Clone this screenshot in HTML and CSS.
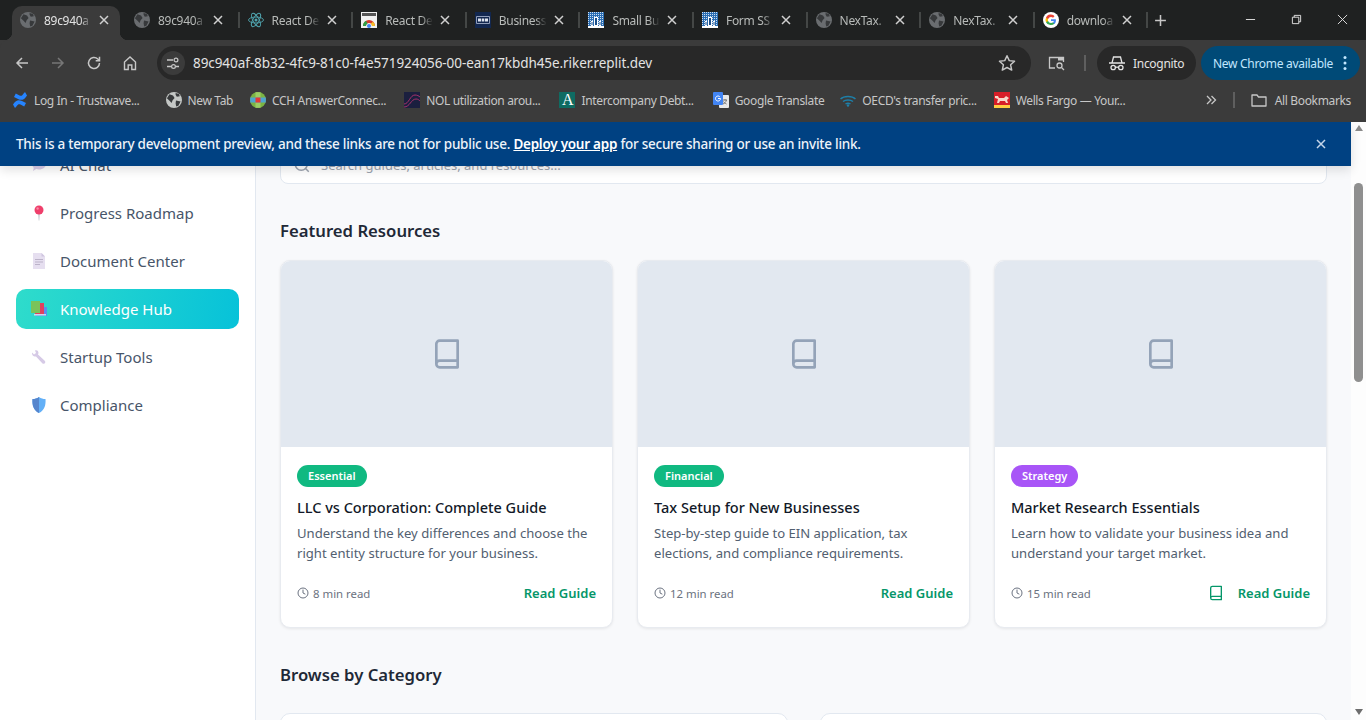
FILE: index.html
```html
<!DOCTYPE html>
<html lang="en">
<head>
    <meta charset="UTF-8">
    <title>Knowledge Hub</title>
    <link rel="stylesheet" href="styles.css">
</head>
<body>
<svg class="defs" width="0" height="0">
    <defs>
        <pattern id="dither" width="2" height="2" patternUnits="userSpaceOnUse">
            <rect width="2" height="2" fill="#2a6db3"/>
            <rect width="1" height="1" fill="#cfe0f2"/>
        </pattern>
    </defs>
    <symbol id="i-globe" viewBox="0 0 16 16">
        <circle cx="8" cy="8" r="8" fill="currentColor"/>
        <path class="land" d="M3.500 2.200 7 3.600 8.600 6 6.600 8.200 5.600 11 3.800 9 .9 6.200zM10 8.600l4.600 1-2.200 4.200-2.200.6-.6-3.200zM9.600 1l3.400 1 .8 2.200-3 .6-1.200-2z"/>
    </symbol>
    <symbol id="i-close" viewBox="0 0 10 10">
        <path d="M1 1l8 8M9 1L1 9" stroke="currentColor" stroke-width="1.500" fill="none"/>
    </symbol>
    <symbol id="i-seal" viewBox="0 0 16 16">
        <rect width="16" height="16" fill="#fff"/>
        <rect width="16" height="16" fill="url(#dither)"/>
        <path d="M0 14h16v2H0zM6 5h4v9H6zM3 9h2v5H3zM11 9h2v5h-2z" fill="#fff"/>
        <path d="M7 6h2v7H7zM3.500 10h1v3h-1zM11.500 10h1v3h-1z" fill="#1c4f8a"/>
    </symbol>
    <symbol id="i-book" viewBox="0 0 24 24">
        <path d="M4 19.500V4.500A2.500 2.500 0 0 1 6.500 2H20v20H6.500A2.500 2.500 0 0 1 4 19.500zM4 19.500A2.500 2.500 0 0 1 6.500 17H20" fill="none" stroke="currentColor" stroke-width="2" stroke-linejoin="round"/>
    </symbol>
    <symbol id="i-clock" viewBox="0 0 24 24">
        <circle cx="12" cy="12" r="10" fill="none" stroke="currentColor" stroke-width="2"/>
        <path d="M12 6v6l4 2" fill="none" stroke="currentColor" stroke-width="2" stroke-linecap="round"/>
    </symbol>
</svg>

<div class="tabstrip">
    <div class="tab active">
        <svg class="fav grey"><use href="#i-globe"/></svg>
        <span class="tab-title">89c940a</span>
        <svg class="tab-x"><use href="#i-close"/></svg>
    </div>
    <div class="tab">
        <svg class="fav grey"><use href="#i-globe"/></svg>
        <span class="tab-title">89c940a</span>
        <svg class="tab-x"><use href="#i-close"/></svg>
    </div>
    <div class="tab">
        <svg class="fav" viewBox="0 0 16 16">
            <g fill="none" stroke="#4fa3ad" stroke-width=".9">
                <ellipse cx="8" cy="8" rx="7.500" ry="3"/>
                <ellipse cx="8" cy="8" rx="7.500" ry="3" transform="rotate(60 8 8)"/>
                <ellipse cx="8" cy="8" rx="7.500" ry="3" transform="rotate(120 8 8)"/>
            </g>
            <circle cx="8" cy="8" r="1.500" fill="#4fa3ad"/>
        </svg>
        <span class="tab-title">React De</span>
        <svg class="tab-x"><use href="#i-close"/></svg>
    </div>
    <div class="tab">
        <svg class="fav" viewBox="0 0 16 16">
            <rect width="16" height="16" fill="#f1f1f1"/>
            <rect x="1" y="1" width="14" height="3" fill="#555"/>
            <path d="M2 14a6 6 0 0 1 12 0h-3a3 3 0 0 0-6 0z" fill="#d8392b"/>
            <path d="M2 14a6 6 0 0 1 3-5.200L6.500 11.400A3 3 0 0 0 5 14z" fill="#2f9e44"/>
            <path d="M11 14a3 3 0 0 0-1.200-2.400L12 9.800A6 6 0 0 1 14 14z" fill="#f6bf26"/>
            <circle cx="8" cy="14" r="2" fill="#4285f4"/>
        </svg>
        <span class="tab-title">React De</span>
        <svg class="tab-x"><use href="#i-close"/></svg>
    </div>
    <div class="tab">
        <svg class="fav" viewBox="0 0 16 16">
            <rect width="16" height="16" fill="#12274f"/>
            <path d="M1.500 4.500h13v7h-13z" fill="none" stroke="#8f9db9"/>
            <path d="M3 6.500h3v3H3zM6.700 6.500h2.600v3H6.700zM10 6.500h3v3h-3z" fill="#dfe5f0"/>
        </svg>
        <span class="tab-title">Business</span>
        <svg class="tab-x"><use href="#i-close"/></svg>
    </div>
    <div class="tab">
        <svg class="fav"><use href="#i-seal"/></svg>
        <span class="tab-title">Small Bu</span>
        <svg class="tab-x"><use href="#i-close"/></svg>
    </div>
    <div class="tab">
        <svg class="fav"><use href="#i-seal"/></svg>
        <span class="tab-title">Form SS</span>
        <svg class="tab-x"><use href="#i-close"/></svg>
    </div>
    <div class="tab">
        <svg class="fav grey"><use href="#i-globe"/></svg>
        <span class="tab-title">NexTax.</span>
        <svg class="tab-x"><use href="#i-close"/></svg>
    </div>
    <div class="tab">
        <svg class="fav grey"><use href="#i-globe"/></svg>
        <span class="tab-title">NexTax.</span>
        <svg class="tab-x"><use href="#i-close"/></svg>
    </div>
    <div class="tab">
        <svg class="fav" viewBox="0 0 16 16">
            <circle cx="8" cy="8" r="8" fill="#fff"/>
            <path d="M12.900 8.200c0-.4 0-.7-.1-1H8v1.900h2.800a2.400 2.400 0 0 1-1 1.600v1.300h1.600c1-.9 1.500-2.200 1.500-3.800z" fill="#4285f4"/>
            <path d="M8 13c1.400 0 2.500-.4 3.400-1.200l-1.600-1.300c-.5.300-1 .5-1.800.5a3.100 3.100 0 0 1-2.900-2.100H3v1.300A5 5 0 0 0 8 13z" fill="#34a853"/>
            <path d="M5.100 8.900a3 3 0 0 1 0-1.900V5.700H3a5 5 0 0 0 0 4.500z" fill="#fbbc05"/>
            <path d="M8 5c.8 0 1.500.3 2 .8l1.500-1.500A5 5 0 0 0 3 5.700L5.100 7A3.100 3.100 0 0 1 8 5z" fill="#ea4335"/>
        </svg>
        <span class="tab-title">downloa</span>
        <svg class="tab-x"><use href="#i-close"/></svg>
    </div>
    <svg class="new-tab" viewBox="0 0 12 12"><path d="M6 1v10M1 6h10" stroke="#c7c7c7" stroke-width="1.400" fill="none"/></svg>
    <div class="win-btns">
        <svg viewBox="0 0 12 12"><path d="M1 6h10" stroke="#e8e8e8" fill="none"/></svg>
        <svg viewBox="0 0 12 12"><path d="M1.500 3.500h7v7h-7zM3.500 3.500v-2h7v7h-2" stroke="#e8e8e8" fill="none"/></svg>
        <svg viewBox="0 0 12 12"><path d="M1 1l10 10M11 1L1 11" stroke="#e8e8e8" fill="none"/></svg>
    </div>
</div>

<div class="toolbar">
    <svg class="nav-ico" viewBox="0 0 16 16"><path d="M14 8H3M8 3L3 8l5 5" stroke="#c7c7c7" stroke-width="1.500" fill="none"/></svg>
    <svg class="nav-ico" viewBox="0 0 16 16"><path d="M2 8h11M8 3l5 5-5 5" stroke="#777" stroke-width="1.500" fill="none"/></svg>
    <svg class="nav-ico" viewBox="0 0 16 16"><path d="M13.500 8A5.500 5.500 0 1 1 11.800 4L13.500 5.500M13.500 1.800v3.900H9.700" stroke="#c7c7c7" stroke-width="1.500" fill="none"/></svg>
    <svg class="nav-ico" viewBox="0 0 16 16"><path d="M2.500 14.500V7L8 2l5.500 5v7.500h-3.700V10H6.200v4.500z" stroke="#c7c7c7" stroke-width="1.400" fill="none"/></svg>
    <div class="omnibox">
        <span class="site-btn">
            <svg viewBox="0 0 14 14"><path d="M1 4h6M1 10.500h4M10 10.500h3" stroke="#c7c7c7" stroke-width="1.300" fill="none"/><circle cx="10" cy="4" r="1.900" stroke="#c7c7c7" stroke-width="1.200" fill="none"/><circle cx="7.500" cy="10.500" r="1.900" stroke="#c7c7c7" stroke-width="1.200" fill="none"/></svg>
        </span>
        <span class="url">89c940af-8b32-4fc9-81c0-f4e571924056-00-ean17kbdh45e.riker.replit.dev</span>
        <svg class="star" viewBox="0 0 16 16"><path d="M8 1.500l2 4.400 4.700.5-3.500 3.200 1 4.700L8 12l-4.200 2.300 1-4.700L1.300 6.400 6 5.900z" stroke="#c7c7c7" stroke-width="1.300" fill="none" stroke-linejoin="round"/></svg>
    </div>
    <svg class="lens" viewBox="0 0 18 16"><path d="M7 13H1.500V2.500h14V7" stroke="#c7c7c7" stroke-width="1.300" fill="none"/><path d="M10 2.500h5.500v3H10z" fill="#c7c7c7"/><circle cx="11.500" cy="10.500" r="2.500" stroke="#c7c7c7" stroke-width="1.300" fill="none"/><path d="M13.500 12.500l2.500 2.500" stroke="#c7c7c7" stroke-width="1.300"/></svg>
    <span class="bar-sep"></span>
    <div class="incognito">
        <svg viewBox="0 0 16 16"><path d="M0 8h16M3 8l1.500-6h7L13 8" stroke="#e3e3e3" stroke-width="1.300" fill="none"/><circle cx="4.200" cy="12.500" r="2.200" stroke="#e3e3e3" stroke-width="1.300" fill="none"/><circle cx="11.800" cy="12.500" r="2.200" stroke="#e3e3e3" stroke-width="1.300" fill="none"/><path d="M6.400 12.200h3.200" stroke="#e3e3e3" stroke-width="1.300"/></svg>
        <span>Incognito</span>
    </div>
    <div class="update">
        <span>New Chrome available</span>
        <svg viewBox="0 0 4 16"><circle cx="2" cy="2.500" r="1.500"/><circle cx="2" cy="8" r="1.500"/><circle cx="2" cy="13.500" r="1.500"/></svg>
    </div>
</div>

<div class="bookmarks">
    <a class="bm">
        <svg viewBox="0 0 16 16"><path d="M1 12.500c3-5 6-5 9-3.500l4 2-1.800 3.500-3.700-2c-1.500-.7-2.500-.5-3.700 1.500L3 16z" fill="#2684ff"/><path d="M15 3.500c-3 5-6 5-9 3.500L2 5l1.800-3.500 3.700 2c1.500.7 2.500.5 3.700-1.500L13 0z" fill="#2684ff"/></svg>
        <span>Log In - Trustwave...</span>
    </a>
    <a class="bm">
        <svg class="light"><use href="#i-globe"/></svg>
        <span>New Tab</span>
    </a>
    <a class="bm">
        <svg viewBox="0 0 16 16"><circle cx="8" cy="8" r="8" fill="#7cb342"/><path d="M5.500 .2h5v15.600h-5z" fill="#9ccc65"/><path d="M.2 5.500h15.600v5H.2z" fill="#4fa3d1"/><rect x="5.500" y="5.500" width="5" height="5" fill="#e53935"/></svg>
        <span>CCH AnswerConnec...</span>
    </a>
    <a class="bm">
        <svg viewBox="0 0 16 16"><rect width="16" height="16" fill="#1b1f3f"/><path d="M0 12c5 0 6-9 11-9 2 0 4 1 5 2M0 15c6 0 7-8 12-8 2 0 3 1 4 2" stroke="#a8326b" fill="none"/></svg>
        <span>NOL utilization arou...</span>
    </a>
    <a class="bm">
        <span class="bm-a">A</span>
        <span>Intercompany Debt...</span>
    </a>
    <a class="bm">
        <svg viewBox="0 0 16 16"><rect x="6" y="3" width="10" height="13" rx="1" fill="#e8e8e8"/><rect width="10" height="13" rx="1" fill="#4285f4"/><path d="M7.500 6.500A2.500 2.500 0 1 1 6.700 4.700M5 6.500h2.500" stroke="#fff" fill="none"/><path d="M10 8h4M12 7v1.200M13.500 8c-.5 2-2 3.500-3.500 4M10.500 9.500c.5 1 1.700 2 3 2.500" stroke="#777" fill="none"/></svg>
        <span>Google Translate</span>
    </a>
    <a class="bm">
        <svg viewBox="0 0 16 16"><path d="M.5 7C4 3.500 12 3.500 15.500 7M3 9.500c2.500-2 7.500-2 10 0M5.500 12c1.500-1 3.500-1 5 0" stroke="#1e7fa8" stroke-width="1.500" fill="none"/><circle cx="8" cy="13.500" r="1.200" fill="#1e7fa8"/></svg>
        <span>OECD's transfer pric...</span>
    </a>
    <a class="bm">
        <svg viewBox="0 0 16 16"><rect width="16" height="16" fill="#d71e28"/><rect y="13" width="16" height="3" fill="#ffcd41"/><path d="M1 4h3l1 2h5l2-2 3 2-2 2 1 3h-2l-1-2H6l-1 2H3l1-4-3-1z" fill="#f7d7c9"/></svg>
        <span>Wells Fargo — Your...</span>
    </a>
    <svg class="more" viewBox="0 0 12 12"><path d="M2 2l4 4-4 4M6.500 2l4 4-4 4" stroke="#c7c7c7" stroke-width="1.300" fill="none"/></svg>
    <span class="bar-sep"></span>
    <a class="bm all">
        <svg viewBox="0 0 16 16"><path d="M1 3h5l1.500 2H15v9H1z" stroke="#c7c7c7" stroke-width="1.300" fill="none" stroke-linejoin="round"/></svg>
        <span>All Bookmarks</span>
    </a>
</div>

<div class="viewport">
    <div class="banner">
        <p>This is a temporary development preview, and these links are not for public use. <a>Deploy your app</a> for secure sharing or use an invite link.</p>
        <svg class="banner-x"><use href="#i-close"/></svg>
    </div>

    <aside class="sidebar">
        <a class="nav-item">
            <svg viewBox="0 0 16 16"><path d="M8 1.500c4 0 7 2.500 7 5.500s-3 5.500-7 5.500c-1 0-2-.2-2.800-.5L2 14l.8-3.200C1.700 9.800 1 8.500 1 7c0-3 3-5.500 7-5.500z" fill="#d9cdea"/></svg>
            <span>AI Chat</span>
        </a>
        <a class="nav-item">
            <svg viewBox="0 0 16 16"><path d="M7.300 8h1.400l-.4 7.500h-.6z" fill="#b9bcc4"/><circle cx="8" cy="5" r="4.500" fill="#ef3f6b"/><circle cx="6.600" cy="3.500" r="1.200" fill="#f78ba6"/></svg>
            <span>Progress Roadmap</span>
        </a>
        <a class="nav-item">
            <svg viewBox="0 0 16 16"><path d="M2 0h8.500L14 3.500V16H2z" fill="#e6dff0"/><path d="M10.500 0L14 3.500h-3.500z" fill="#cfc5df"/><path d="M4 6.500h8M4 9h8M4 11.500h5" stroke="#bcb3c9" fill="none"/></svg>
            <span>Document Center</span>
        </a>
        <a class="nav-item current">
            <svg viewBox="0 0 16 16"><rect x="5" y="6" width="11" height="9" fill="#5b8def"/><rect x="4" y="2" width="9" height="11" fill="#e0405f"/><rect y="0" width="9" height="12" fill="#7ac35a"/><rect x="3" y="13" width="12" height="1.500" fill="#cfd8ea"/></svg>
            <span>Knowledge Hub</span>
        </a>
        <a class="nav-item">
            <svg viewBox="0 0 16 16"><path d="M1 3.500L3 5.500 5 4 4 1.500C6 .5 7.500 2 7.500 4L7 5.500l7 6.500a1.800 1.800 0 0 1-2.500 2.500L5 7.500C3 8 .5 6 1 3.500z" fill="#d6cae6"/></svg>
            <span>Startup Tools</span>
        </a>
        <a class="nav-item">
            <svg viewBox="0 0 16 16"><path d="M8 0c2 1.500 4 2 6.500 2 .5 6-1 11.500-6.500 14C2.500 13.500 1 8 1.500 2 4 2 6 1.500 8 0z" fill="#63b0f7"/><path d="M8 0v16C2.500 13.500 1 8 1.500 2 4 2 6 1.500 8 0z" fill="#5685cc"/></svg>
            <span>Compliance</span>
        </a>
    </aside>

    <main class="main">
        <div class="search">
            <svg viewBox="0 0 24 24"><circle cx="11" cy="11" r="8" fill="none" stroke="#9ca3af" stroke-width="2"/><path d="M21 21l-4.300-4.300" stroke="#9ca3af" stroke-width="2"/></svg>
            <span>Search guides, articles, and resources...</span>
        </div>

        <h2 class="section-title">Featured Resources</h2>
        <div class="featured">
            <div class="card">
                <div class="card-img"><svg><use href="#i-book"/></svg></div>
                <div class="card-body">
                    <span class="badge green">Essential</span>
                    <h3>LLC vs Corporation: Complete Guide</h3>
                    <p>Understand the key differences and choose the right entity structure for your business.</p>
                    <div class="card-foot">
                        <span class="read-time"><svg><use href="#i-clock"/></svg>8 min read</span>
                        <a class="read-link">Read Guide</a>
                    </div>
                </div>
            </div>
            <div class="card">
                <div class="card-img"><svg><use href="#i-book"/></svg></div>
                <div class="card-body">
                    <span class="badge green">Financial</span>
                    <h3>Tax Setup for New Businesses</h3>
                    <p>Step-by-step guide to EIN application, tax elections, and compliance requirements.</p>
                    <div class="card-foot">
                        <span class="read-time"><svg><use href="#i-clock"/></svg>12 min read</span>
                        <a class="read-link">Read Guide</a>
                    </div>
                </div>
            </div>
            <div class="card">
                <div class="card-img"><svg><use href="#i-book"/></svg></div>
                <div class="card-body">
                    <span class="badge purple">Strategy</span>
                    <h3>Market Research Essentials</h3>
                    <p>Learn how to validate your business idea and understand your target market.</p>
                    <div class="card-foot">
                        <span class="read-time"><svg><use href="#i-clock"/></svg>15 min read</span>
                        <a class="read-link"><svg><use href="#i-book"/></svg>Read Guide</a>
                    </div>
                </div>
            </div>
        </div>

        <h2 class="section-title browse">Browse by Category</h2>
        <div class="categories">
            <div class="cat-card"></div>
            <div class="cat-card"></div>
        </div>
    </main>

    <div class="scrollbar">
        <span class="arrow up"></span>
        <span class="thumb"></span>
        <span class="arrow down"></span>
    </div>
</div>
</body>
</html>
```

FILE: styles.css
```css
*{
    margin: 0;
    padding: 0;
    box-sizing: border-box;
}
html, body{
    height: 720px;
    overflow: hidden;
}
body{
    display: flex;
    flex-direction: column;
    font-family: "Noto Sans", "Open Sans", sans-serif;
    background: #3b3b3b;
}
.defs{
    position: absolute;
}
.land{
    fill: #37393b;
}

/* tab strip */
.tabstrip{
    height: 40px;
    flex: none;
    display: flex;
    align-items: flex-start;
    padding: 6px 0 0 12px;
    background: #1f2121;
    color: #b8bbb9;
}
.tab{
    width: 113.6px;
    flex: none;
    height: 28px;
    display: flex;
    align-items: center;
    padding-left: 8px;
    position: relative;
    font-size: 12px;
    letter-spacing: -.3px;
}
.tab::after{
    content: "";
    position: absolute;
    right: 0;
    top: 6px;
    width: 2px;
    height: 16px;
    background: #444746;
}
.tab:nth-child(2){
    margin-left: 6px;
}
.tab.active{
    width: 108px;
    height: 34px;
    padding-bottom: 6px;
    background: #3b3b3b;
    border-radius: 10px 10px 0 0;
    color: #e3e3e3;
}
/* the two little curves at the foot of the open tab */
.tab.active::before, .tab.active::after{
    content: "";
    position: absolute;
    top: auto;
    bottom: 0;
    width: 8px;
    height: 8px;
    background: radial-gradient(circle at 0 0, transparent 8px, #3b3b3b 8.500px);
}
.tab.active::before{
    left: -8px;
}
.tab.active::after{
    right: -8px;
    background: radial-gradient(circle at 100% 0, transparent 8px, #3b3b3b 8.500px);
}
.fav{
    width: 16px;
    height: 16px;
    flex: none;
}
.fav.grey{
    color: #6a6d70;
}
.tab-title{
    width: 48px;
    margin-left: 8px;
    white-space: nowrap;
    -webkit-mask-image: linear-gradient(to right, #000 75%, transparent);
    mask-image: linear-gradient(to right, #000 75%, transparent);
}
.tab-x{
    width: 10px;
    height: 10px;
    margin-left: 7px;
    color: #d0d0d0;
}
.new-tab{
    width: 13px;
    height: 13px;
    margin: 8px 0 0 6px;
}
.win-btns{
    margin-left: auto;
    display: flex;
    gap: 35px;
    padding: 8px 18px 0 0;
}
.win-btns svg{
    width: 11px;
    height: 11px;
}

/* toolbar */
.toolbar{
    height: 46px;
    flex: none;
    display: flex;
    align-items: center;
    padding: 0 6px 0 14px;
    background: #3b3b3b;
    border-radius: 8px 8px 0 0;
}
.nav-ico{
    width: 16px;
    height: 16px;
    margin-right: 20px;
    flex: none;
}
.omnibox{
    width: 874px;
    height: 34px;
    margin-left: -1px;
    display: flex;
    align-items: center;
    padding: 0 15px 0 4px;
    background: #282828;
    border-radius: 17px;
}
.site-btn{
    width: 24px;
    height: 24px;
    display: flex;
    align-items: center;
    justify-content: center;
    border-radius: 50%;
    background: #3b3b3b;
}
.site-btn svg{
    width: 14px;
    height: 14px;
}
.url{
    margin-left: 8px;
    font-size: 13.500px;
    letter-spacing: -.07px;
    color: #e3e3e3;
}
.star{
    width: 18px;
    height: 18px;
    margin-left: auto;
}
.lens{
    width: 18px;
    height: 16px;
    margin-left: 17px;
}
.bar-sep{
    width: 2px;
    height: 16px;
    background: #5f5f5f;
    flex: none;
}
.toolbar .bar-sep{
    margin: 0 11px 0 18px;
}
.incognito{
    width: 99px;
    height: 34px;
    display: flex;
    align-items: center;
    gap: 8px;
    padding-left: 12px;
    background: #282828;
    border-radius: 17px;
    font-size: 12px;
    letter-spacing: -.3px;
    color: #e3e3e3;
}
.incognito svg{
    width: 16px;
    height: 16px;
}
.update{
    width: 159px;
    height: 34px;
    margin-left: 5px;
    display: flex;
    align-items: center;
    padding-left: 12px;
    background: #004a77;
    border-radius: 17px;
    font-size: 12px;
    letter-spacing: -.3px;
    color: #c2e7ff;
    white-space: nowrap;
}
.update svg{
    width: 4px;
    height: 16px;
    margin-left: 10px;
    fill: #c2e7ff;
}

/* bookmarks bar */
.bookmarks{
    height: 36px;
    flex: none;
    display: flex;
    align-items: center;
    padding: 0 15px 8px 12px;
    background: #3b3b3b;
    font-size: 12px;
    letter-spacing: -.35px;
    color: #c7c7c7;
}
.bm{
    display: flex;
    align-items: center;
    gap: 6px;
    margin-right: 17px;
    white-space: nowrap;
}
.bm:first-child{
    margin-right: 26px;
}
.bm:nth-child(3){
    margin-right: 18px;
}
.bm:nth-child(4){
    margin-right: 19px;
}
.bm:nth-child(5){
    margin-right: 19px;
}
.bm:nth-child(6){
    margin-right: 16px;
}
.bm svg, .bm-a{
    width: 16px;
    height: 16px;
    flex: none;
}
.bm svg.light{
    color: #c4c7c5;
}
.bm-a{
    display: flex;
    align-items: center;
    justify-content: center;
    background: #0f6b62;
    color: #fff;
    font-family: "Liberation Serif", serif;
    font-size: 16px;
}
.more{
    width: 12px;
    height: 12px;
    margin-left: auto;
}
.bookmarks .bar-sep{
    margin: 0 16px 0 16px;
}
.bm.all{
    margin-right: 0;
    gap: 8px;
}

/* page */
.viewport{
    flex: 1;
    min-height: 0;
    display: flex;
    position: relative;
    overflow: hidden;
}
.banner{
    position: absolute;
    left: 0;
    top: 0;
    right: 15px;
    height: 44px;
    display: flex;
    align-items: center;
    justify-content: space-between;
    padding: 0 25px 0 16px;
    background: #004182;
    color: #eef3f9;
    font-size: 13.500px;
    font-weight: 500;
    letter-spacing: -.25px;
    box-shadow: 0 4px 10px rgba(0, 0, 0, .12);
}
.banner a{
    font-weight: 600;
    color: #fff;
    text-decoration: underline;
}
.banner-x{
    width: 10px;
    height: 10px;
    color: #c5d6ea;
}
.sidebar{
    width: 256px;
    flex: none;
    padding: 23px 16px 0;
    display: flex;
    flex-direction: column;
    gap: 8px;
    background: #fff;
    border-right: 1px solid #e2e8f0;
}
.nav-item{
    height: 40px;
    width: 223px;
    display: flex;
    align-items: center;
    gap: 13px;
    padding-left: 15px;
    border-radius: 10px;
    font-size: 15px;
    color: #475569;
}
.nav-item svg{
    width: 16px;
    height: 16px;
    flex: none;
}
.nav-item.current{
    background: linear-gradient(100deg, #2fdccb, #07c2d9);
    color: #fff;
}
.main{
    flex: 1;
    padding: 24px 24px 0 24px;
    background: #f8f9fb;
}
.search{
    height: 38px;
    display: flex;
    align-items: center;
    gap: 10px;
    padding-left: 12px;
    background: #fff;
    border: 1px solid #e2e8f0;
    border-radius: 8px;
    font-size: 13px;
    color: #9ca3af;
}
.search svg{
    width: 18px;
    height: 18px;
}
.section-title{
    margin-top: 34px;
    height: 26px;
    line-height: 26px;
    font-size: 16.700px;
    font-weight: 600;
    color: #1f2937;
}
.featured{
    margin-top: 16px;
    display: grid;
    grid-template-columns: repeat(3, 1fr);
    gap: 24px;
}
.card{
    height: 368px;
    background: #fff;
    border: 1px solid #e8ebf0;
    border-radius: 10px;
    box-shadow: 0 1px 3px rgba(0, 0, 0, .08);
    overflow: hidden;
}
.card-img{
    height: 186px;
    display: flex;
    align-items: center;
    justify-content: center;
    background: #e2e8f0;
    color: #94a3b8;
}
.card-img svg{
    width: 32px;
    height: 32px;
}
.card-body{
    padding: 16px 16px 0;
}
.badge{
    display: inline-block;
    height: 22px;
    line-height: 22px;
    padding: 0 11px;
    border-radius: 11px;
    color: #fff;
    font-size: 11px;
    font-weight: 600;
}
.badge.green{
    background: #10b981;
}
.badge.purple{
    background: #a855f7;
}
.card h3{
    margin-top: 9px;
    height: 22px;
    line-height: 22px;
    font-size: 14.500px;
    font-weight: 500;
    color: #111827;
}
.card p{
    margin-top: 5px;
    font-size: 13.100px;
    line-height: 20px;
    color: #526070;
}
.card-foot{
    margin-top: 21px;
    display: flex;
    align-items: center;
    justify-content: space-between;
}
.read-time{
    display: flex;
    align-items: center;
    gap: 4px;
    font-size: 11.400px;
    color: #6b7280;
}
.read-time svg{
    width: 12px;
    height: 12px;
}
.read-link{
    display: flex;
    align-items: center;
    gap: 14px;
    font-size: 13px;
    font-weight: 600;
    color: #059669;
}
.read-link svg{
    width: 16px;
    height: 16px;
}
.section-title.browse{
    margin-top: 34px;
}
.categories{
    margin-top: 25px;
    display: grid;
    grid-template-columns: 1fr 1fr;
    gap: 32px;
}
.cat-card{
    height: 120px;
    background: #fff;
    border: 1px solid #e2e8f0;
    border-radius: 10px;
}
.scrollbar{
    width: 15px;
    flex: none;
    display: flex;
    flex-direction: column;
    align-items: center;
    background: #fdfdfd;
}
.arrow{
    width: 0;
    height: 0;
    border-left: 4.500px solid transparent;
    border-right: 4.500px solid transparent;
}
.arrow.up{
    margin-top: 3px;
    border-bottom: 6px solid #8a8a8a;
}
.arrow.down{
    margin-top: auto;
    margin-bottom: 5px;
    border-top: 6px solid #6e6e6e;
}
.thumb{
    width: 9px;
    height: 199px;
    margin-top: 52px;
    background: #8f8f8f;
    border-radius: 5px;
}
```
